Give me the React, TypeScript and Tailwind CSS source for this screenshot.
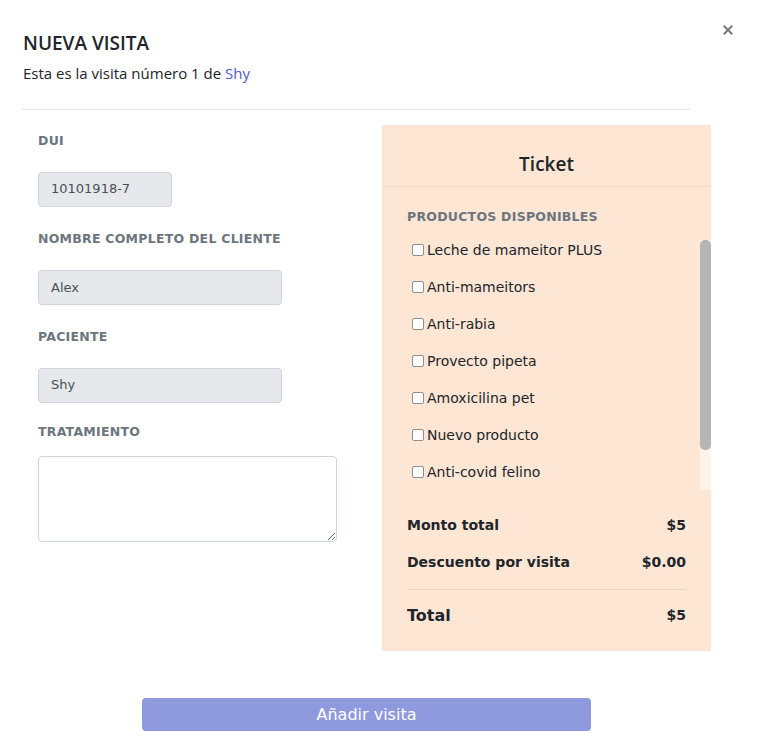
import React from "react";

const products = [
  "Leche de mameitor PLUS",
  "Anti-mameitors",
  "Anti-rabia",
  "Provecto pipeta",
  "Amoxicilina pet",
  "Nuevo producto",
  "Anti-covid felino",
];

const body = { fontFamily: '"DejaVu Sans", "Noto Sans", sans-serif' } as React.CSSProperties;
const head = { fontFamily: '"Open Sans", "Noto Sans", sans-serif' } as React.CSSProperties;

function Label({ children }: { children: React.ReactNode }) {
  return (
    <div className="text-[12.5px] font-bold uppercase tracking-[0.02em] text-[#6c757d] leading-none" style={body}>
      {children}
    </div>
  );
}

function Field({ value, w }: { value: string; w: string }) {
  return (
    <div
      className={`${w} h-[35px] flex items-center px-3 rounded-[4px] border border-[#ced4da] bg-[#e6e8eb] text-[13px] text-[#495057]`}
      style={body}
    >
      {value}
    </div>
  );
}

export default function App() {
  return (
    <div className="w-[757px] h-[756px] bg-white relative overflow-hidden">
      <button className="absolute left-[723px] top-[25px] text-[#7a7a7a]" aria-label="close">
        <svg width="10" height="10" viewBox="0 0 10 10">
          <path d="M1.5 1.5 L8.5 8.5 M8.5 1.5 L1.5 8.5" stroke="#7a7a7a" strokeWidth="2" strokeLinecap="square" />
        </svg>
      </button>
      <div className="pl-[23px] pt-[32px]">
        <h1 className="text-[19px] font-semibold text-[#212529] leading-[22px]" style={head}>
          NUEVA VISITA
        </h1>
        <p className="mt-[9px] text-[15px] text-[#212529] leading-[20px]" style={head}>
          Esta es la visita número 1 de <span className="text-[#4e5bd6]">Shy</span>
        </p>
      </div>
      <div className="ml-[22px] w-[668px] h-px bg-[#e4e4e4] mt-[26px]" />
      <div className="flex mt-[15px]">
        <div className="w-[382px] pl-[38px] pt-[10px]">
          <Label>DUI</Label>
          <div className="mt-[24px]">
            <Field value="10101918-7" w="w-[134px]" />
          </div>
          <div className="mt-[26px]">
            <Label>Nombre completo del cliente</Label>
          </div>
          <div className="mt-[25px]">
            <Field value="Alex" w="w-[244px]" />
          </div>
          <div className="mt-[26px]">
            <Label>Paciente</Label>
          </div>
          <div className="mt-[24px]">
            <Field value="Shy" w="w-[244px]" />
          </div>
          <div className="mt-[23px]">
            <Label>Tratamiento</Label>
          </div>
          <textarea className="mt-[18px] block w-[299px] h-[86px] rounded-[4px] border border-[#ced4da] bg-white resize-y" />
        </div>
        <div className="w-[329px] h-[526px] bg-[#fee6d5] flex flex-col">
          <div className="h-[62px] pt-[28px] flex justify-center border-b border-[#f5d9c6]">
            <span className="text-[19px] font-semibold text-[#212529] leading-[22px]" style={head}>
              Ticket
            </span>
          </div>
          <div className="pl-[25px] mt-[24px]">
            <Label>Productos disponibles</Label>
          </div>
          <div className="flex mt-[8px]">
            <div className="flex-1 pl-[30px] flex flex-col">
              {products.map((p) => (
                <div key={p} className="h-[37px] flex items-center">
                  <span className="w-[12px] h-[12px] rounded-[2px] border border-[#8f8f8f] bg-white mr-[3px]" />
                  <span className="text-[14px] text-[#212529]" style={body}>
                    {p}
                  </span>
                </div>
              ))}
            </div>
            <div className="w-[11px] mt-[8px] h-[250px] bg-[#fff3ea] flex flex-col">
              <div className="h-[210px] bg-[#b5b5b5] rounded-[5px]" />
            </div>
          </div>
          <div className="px-[25px] mt-[25px]" style={body}>
            <div className="flex justify-between items-center h-[20px] text-[14px] font-bold text-[#212529]">
              <span>Monto total</span>
              <span>$5</span>
            </div>
            <div className="flex justify-between items-center h-[20px] mt-[17px] text-[14px] font-bold text-[#212529]">
              <span>Descuento por visita</span>
              <span>$0.00</span>
            </div>
            <div className="h-px bg-[#ecd4c3] mt-[16px]" />
            <div className="flex justify-between items-center h-[20px] mt-[16px] font-bold text-[#212529]">
              <span className="text-[16px]">Total</span>
              <span className="text-[14px]">$5</span>
            </div>
          </div>
        </div>
      </div>
      <div className="flex mt-[47px]">
        <button
          className="ml-[142px] w-[449px] h-[33px] rounded-[4px] bg-[#8f99de] text-white text-[16px]"
          style={body}
        >
          Añadir visita
        </button>
      </div>
    </div>
  );
}
